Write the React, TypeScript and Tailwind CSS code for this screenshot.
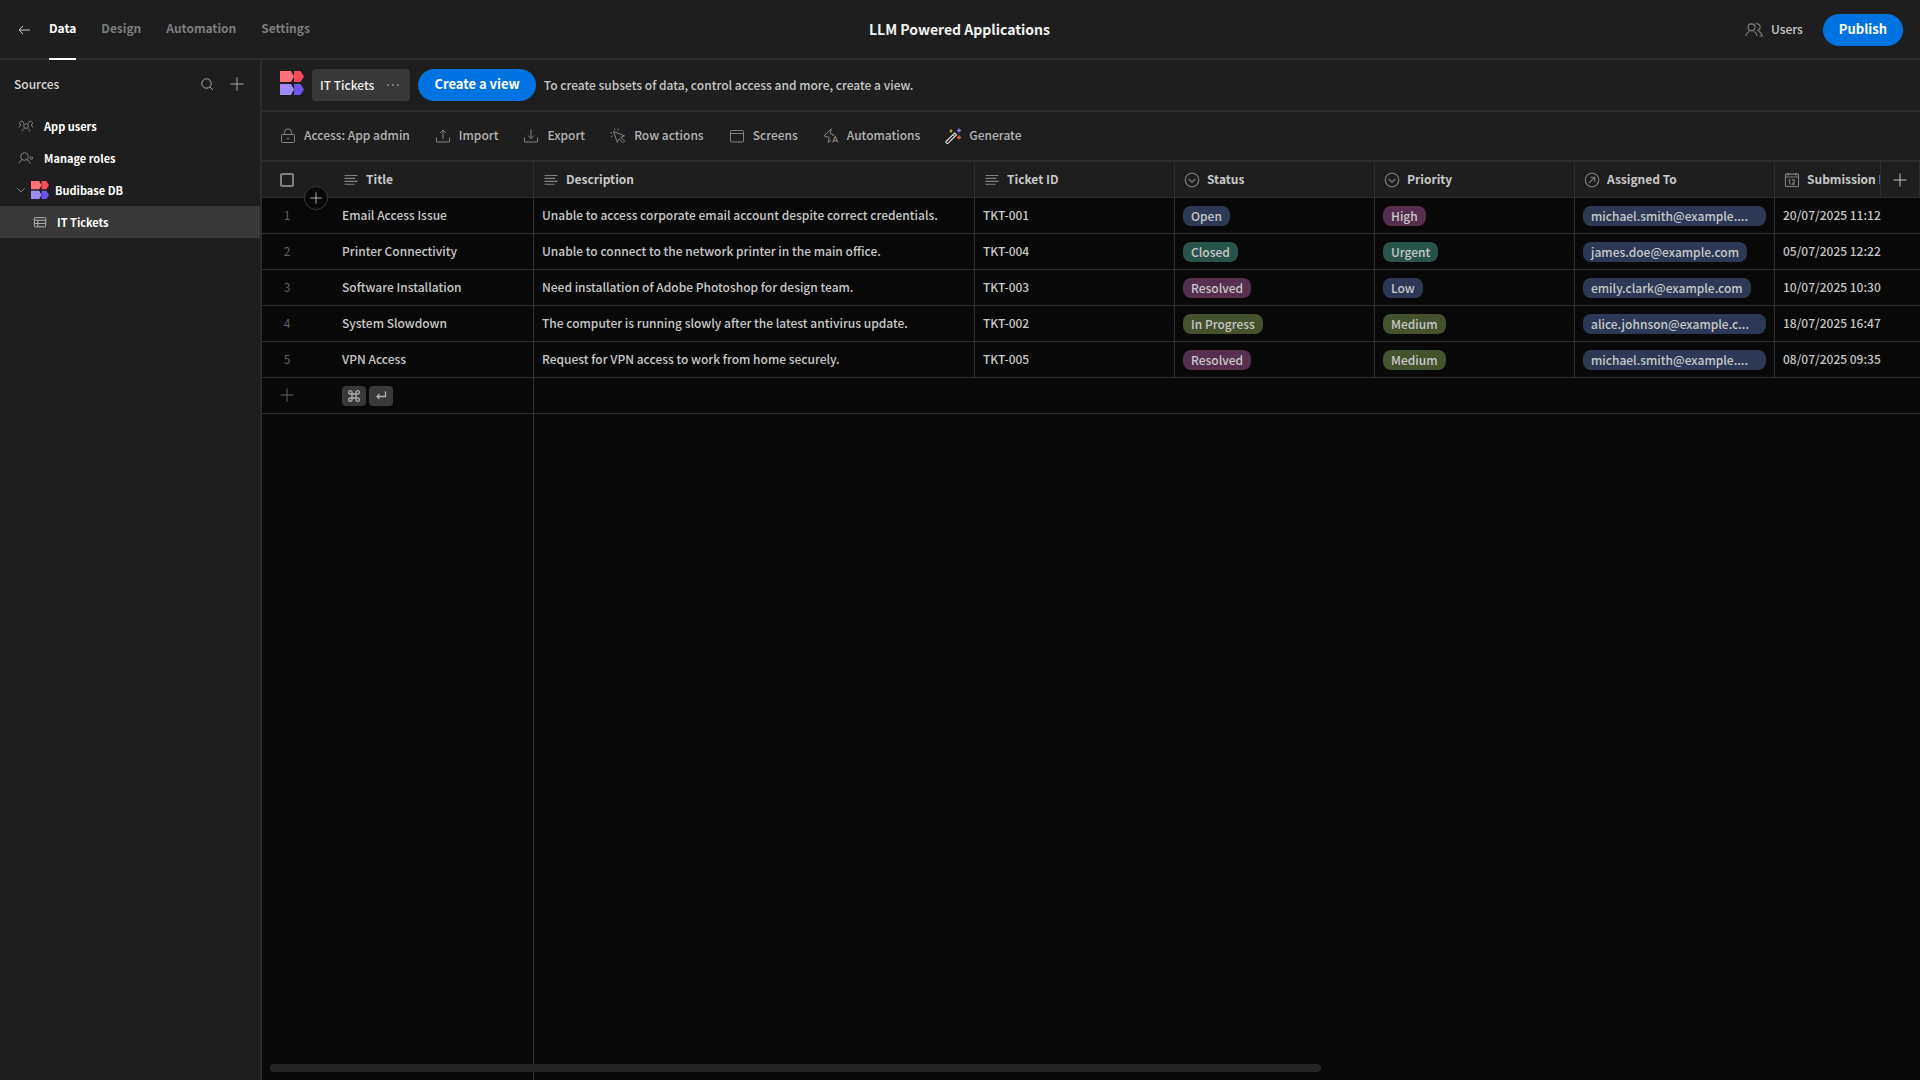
import type { ReactNode } from "react"

interface IconProps {
  size?: number
  className?: string
  children?: ReactNode
}

function Icon({ size = 16, className = "", children }: IconProps) {
  return (
    <svg
      width={size}
      height={size}
      viewBox="0 0 16 16"
      fill="none"
      stroke="currentColor"
      strokeWidth="1"
      aria-hidden="true"
      className={`shrink-0 ${className}`}
    >
      {children}
    </svg>
  )
}

function Logo({ size }: { size: number }) {
  return (
    <svg width={size} height={size} viewBox="0 0 24 24" aria-hidden="true" className="shrink-0">
      <path d="M0 0h11L14 5.500 11 11H0z" fill="#ff7277" />
      <path d="M14 0h6.500L24 5.500 20.500 11H14z" fill="#fb4a5a" />
      <path d="M0 13h11L14 18.500 11 24H0z" fill="#a08cf8" />
      <path d="M14 13h6.500L24 18.500 20.500 24H14z" fill="#6d55ee" />
    </svg>
  )
}

const BackIcon = () => (
  <Icon className="text-[#c4c4c4]">
    <path d="M14 8H3M7 4 3 8l4 4" />
  </Icon>
)

const SearchIcon = () => (
  <Icon>
    <circle cx="7.500" cy="7.500" r="4.700" />
    <path d="m11 11 3 3" />
  </Icon>
)

const PlusIcon = ({ size = 16 }: { size?: number }) => (
  <Icon size={size}>
    <path d="M8 1.500v13M1.500 8h13" />
  </Icon>
)

const UsersIcon = () => (
  <Icon size={18}>
    <circle cx="5.800" cy="5.500" r="3" />
    <path d="M.8 13.300c.3-2.300 1.500-3.300 3.200-4.300M7.600 9c1.700 1 2.900 2 3.200 4.300M9.200 2.700a3 3 0 1 1 1.600 5.700M12 8.800c1.700.9 2.900 2.200 3.200 4.500h-2" />
  </Icon>
)

const GroupIcon = () => (
  <Icon>
    <circle cx="8" cy="8" r="2.300" />
    <path d="M4.200 13.500c.3-1.700 1.100-2.600 2.400-3.300M9.400 10.200c1.300.7 2.100 1.600 2.400 3.300M5.500 5.600A2 2 0 1 0 3 7c-1 .5-1.700 1.200-1.900 2.500M10.500 5.600A2 2 0 1 1 13 7c1 .5 1.700 1.200 1.900 2.500" />
  </Icon>
)

const RoleIcon = () => (
  <Icon>
    <circle cx="6.500" cy="6.500" r="3.800" />
    <path d="M1 13.500c.4-2 1.600-2.800 3.300-3.700M8.700 9.800c1.700.9 2.900 1.700 3.300 3.700" />
    <circle cx="13.300" cy="8" r="1.300" />
  </Icon>
)

const ChevronIcon = () => (
  <Icon size={12} className="text-[#8a8a8a]">
    <path d="m3 5.500 5 5 5-5" strokeWidth="1.300" />
  </Icon>
)

const TableIcon = () => (
  <Icon size={14}>
    <rect x="1.500" y="3" width="13" height="10.500" rx="1" />
    <path d="M1.500 6h13M1.500 9.700h13M5.500 6v7.500" />
  </Icon>
)

const LockIcon = () => (
  <Icon>
    <rect x="1.500" y="6.500" width="13" height="8" rx="1" />
    <path d="M4.500 6.500V4.300a3.500 3.500 0 0 1 7 0v2.200" />
    <circle cx="8" cy="10.500" r=".6" fill="currentColor" />
  </Icon>
)

const ImportIcon = () => (
  <Icon>
    <path d="M1.500 9.500v4.500h13V9.500M8 11V2M5 5l3-3 3 3" />
  </Icon>
)

const ExportIcon = () => (
  <Icon>
    <path d="M1.500 9.500v4.500h13V9.500M8 1.500V10.500M5 7.500l3 3 3-3" />
  </Icon>
)

const ClickIcon = () => (
  <Icon>
    <path d="m3.500 3.500 11 4.300-3.800 1.600 4 3.700-1.600 1.600-4-3.900-1.700 3.700z" />
    <path d="M5 2.200 4.500.5M2 5.300l-1.800-.5M2.500 7.700l-1.700 1.300M7.600 2.500 8.700.7" />
  </Icon>
)

const ScreenIcon = () => (
  <Icon>
    <rect x="1.500" y="2.500" width="13" height="11.500" rx=".8" />
    <path d="M1.500 5.500h13" />
  </Icon>
)

const AutomationIcon = () => (
  <Icon>
    <path d="M8.300 12 5 14.500l1.300-5L.9 7.800 8.300.9 7.200 5.700l3.500 1.100L9.500 8" />
    <path d="m9.700 14.500 2.500-6 2.700 6M10.500 12.700h3.500" strokeWidth="1.200" />
  </Icon>
)

const WandIcon = () => (
  <Icon>
    <path d="M1 13.500 9.700 5l1.800 1.700L3 15.300c-1 .5-2.400-.6-2-1.800z" stroke="#d8d8d8" strokeWidth="1.200" />
    <path d="m8 6.800 1.700 1.700" stroke="#d8d8d8" />
    <path d="M6 1.500v3M4.500 3h3" stroke="#e8bd3c" strokeWidth="1.200" />
    <path d="M14 .5v4M12 2.500h4" stroke="#8b7df5" strokeWidth="1.400" />
    <path d="M14 7.500v4M12 9.500h4" stroke="#ee6051" strokeWidth="1.400" />
  </Icon>
)

const TextIcon = () => (
  <Icon size={18}>
    <path d="M2.200 4h11.600M2.200 6.600h9.600M2.200 9.200h11.600M2.200 11.800h9" />
  </Icon>
)

const OptionsIcon = () => (
  <Icon size={18}>
    <circle cx="8" cy="8" r="6" />
    <path d="m5 7 3 3 3-3" />
  </Icon>
)

const RelationIcon = () => (
  <Icon size={18}>
    <circle cx="8" cy="8" r="6" />
    <path d="m5.500 10.500 5-5M6.500 5.500h4v4" />
  </Icon>
)

const CalendarIcon = () => (
  <Icon size={18}>
    <rect x="2.200" y="2.800" width="11.600" height="11" rx=".8" />
    <path d="M2.200 5.300h11.600M4.700 1.500v2.500M11.300 1.500v2.500M5 8.300l1-.7v4.500M8 8.300c1-1.200 2.800-.5 2.200 1L8.200 11.700h2.500" />
  </Icon>
)

const tabs = ["Data", "Design", "Automation", "Settings"]

const actions = [
  { label: "Access: App admin", icon: <LockIcon /> },
  { label: "Import", icon: <ImportIcon /> },
  { label: "Export", icon: <ExportIcon /> },
  { label: "Row actions", icon: <ClickIcon /> },
  { label: "Screens", icon: <ScreenIcon /> },
  { label: "Automations", icon: <AutomationIcon /> },
  { label: "Generate", icon: <WandIcon /> },
]

const columns = [
  { label: "Title", icon: <TextIcon /> },
  { label: "Description", icon: <TextIcon /> },
  { label: "Ticket ID", icon: <TextIcon /> },
  { label: "Status", icon: <OptionsIcon /> },
  { label: "Priority", icon: <OptionsIcon /> },
  { label: "Assigned To", icon: <RelationIcon /> },
  { label: "Submission Date", icon: <CalendarIcon /> },
]

const tickets = [
  {
    title: "Email Access Issue",
    description: "Unable to access corporate email account despite correct credentials.",
    id: "TKT-001",
    status: "Open",
    priority: "High",
    assignee: "michael.smith@example....",
    date: "20/07/2025 11:12",
  },
  {
    title: "Printer Connectivity",
    description: "Unable to connect to the network printer in the main office.",
    id: "TKT-004",
    status: "Closed",
    priority: "Urgent",
    assignee: "james.doe@example.com",
    date: "05/07/2025 12:22",
  },
  {
    title: "Software Installation",
    description: "Need installation of Adobe Photoshop for design team.",
    id: "TKT-003",
    status: "Resolved",
    priority: "Low",
    assignee: "emily.clark@example.com",
    date: "10/07/2025 10:30",
  },
  {
    title: "System Slowdown",
    description: "The computer is running slowly after the latest antivirus update.",
    id: "TKT-002",
    status: "In Progress",
    priority: "Medium",
    assignee: "alice.johnson@example.c...",
    date: "18/07/2025 16:47",
  },
  {
    title: "VPN Access",
    description: "Request for VPN access to work from home securely.",
    id: "TKT-005",
    status: "Resolved",
    priority: "Medium",
    assignee: "michael.smith@example....",
    date: "08/07/2025 09:35",
  },
]

const pillColors: Record<string, string> = {
  Open: "bg-[#2c3854]",
  Low: "bg-[#2c3854]",
  Closed: "bg-[#28544c]",
  Urgent: "bg-[#28544c]",
  Resolved: "bg-[#562e4e]",
  High: "bg-[#562e4e]",
  "In Progress": "bg-[#44522e]",
  Medium: "bg-[#44522e]",
}

function Pill({ label }: { label: string }) {
  // Shortened labels take the whole cell
  const width = label.endsWith("...") ? "w-full" : "w-fit"
  return (
    <span
      className={`block h-5 rounded-lg px-2 leading-5 ${width} ${pillColors[label] ?? "bg-[#2c3854]"}`}
    >
      {label}
    </span>
  )
}

function Cell({ children }: { children?: ReactNode }) {
  return (
    <td className="h-9 overflow-hidden border-r border-b border-[#2e2e2e] px-2 whitespace-nowrap">
      {children}
    </td>
  )
}

function TextCell({ text }: { text: string }) {
  return (
    <Cell>
      <span className="block pb-0.5">{text}</span>
    </Cell>
  )
}

function Header() {
  return (
    <header className="grid h-[60px] shrink-0 grid-cols-[1fr_auto_1fr] items-center border-b-2 border-[#2c2c2c] bg-[#1e1e1e] pr-[17px] pl-4">
      <div className="flex h-[60px] items-center self-start">
        <button type="button" aria-label="Back">
          <BackIcon />
        </button>
        <nav className="ml-[17px] flex h-full gap-[25px]">
          {tabs.map((tab) => (
            <a
              key={tab}
              href="#"
              className={`flex h-full items-center border-b-2 pb-0.5 font-bold ${
                tab === "Data" ? "border-white text-white" : "border-transparent text-[#7c7c7c]"
              }`}
            >
              {tab}
            </a>
          ))}
        </nav>
      </div>
      <h1 className="pb-0.5 text-sm font-bold text-[#f2f2f2]">LLM Powered Applications</h1>
      <div className="flex items-center justify-end gap-5">
        <button type="button" className="flex items-center gap-2 font-medium text-[#c8c8c8]">
          <span className="text-[#808080]">
            <UsersIcon />
          </span>
          <span className="pb-0.5">Users</span>
        </button>
        <button
          type="button"
          className="h-8 rounded-full bg-[#0073e3] px-4 pb-0.5 text-[13px] font-bold text-white"
        >
          Publish
        </button>
      </div>
    </header>
  )
}

function Sidebar() {
  return (
    <aside className="w-[262px] shrink-0 border-r-2 border-[#2c2c2c] bg-[#1e1e1e]">
      <div className="flex h-[50px] items-center pr-[15px] pl-[14px]">
        <h2 className="flex-1 pb-0.5 font-medium text-[#d8d8d8]">Sources</h2>
        <div className="flex gap-[14px] pb-0.5 text-[#a8a8a8]">
          <button type="button" aria-label="Search sources">
            <SearchIcon />
          </button>
          <button type="button" aria-label="Add source">
            <PlusIcon />
          </button>
        </div>
      </div>
      <nav className="text-[11px] font-bold text-white">
        <a href="#" className="flex h-8 items-center gap-[10px] pl-[18px]">
          <span className="text-[#808080]">
            <GroupIcon />
          </span>
          App users
        </a>
        <a href="#" className="flex h-8 items-center gap-[10px] pl-[18px]">
          <span className="text-[#808080]">
            <RoleIcon />
          </span>
          Manage roles
        </a>
        <a href="#" className="flex h-8 items-center pl-[15px]">
          <ChevronIcon />
          <span className="mr-[6px] ml-1">
            <Logo size={18} />
          </span>
          Budibase DB
        </a>
        <a href="#" className="flex h-8 items-center gap-[10px] bg-[#383838] pl-[33px]">
          <span className="text-[#c0c0c0]">
            <TableIcon />
          </span>
          IT Tickets
        </a>
      </nav>
    </aside>
  )
}

function Grid() {
  return (
    <div className="relative flex-1 overflow-hidden bg-[#080808]">
      {/* Edge of the pinned title column */}
      <div className="absolute inset-y-0 left-[271px] w-px bg-[#2e2e2e]" />

      <table className="w-[1713px] table-fixed border-separate border-spacing-0 text-left text-[#c8c8c8]">
        <colgroup>
          <col className="w-[72px]" />
          <col className="w-[200px]" />
          <col className="w-[441px]" />
          <col className="w-[200px]" />
          <col className="w-[200px]" />
          <col className="w-[200px]" />
          <col className="w-[200px]" />
          <col className="w-[200px]" />
        </colgroup>
        <thead className="bg-[#1e1e1e]">
          <tr>
            <th className="h-9 border-b border-[#2e2e2e] pl-[18px]">
              <input
                type="checkbox"
                aria-label="Select all rows"
                className="block size-[14px] appearance-none rounded-xs border-2 border-[#808080]"
              />
            </th>
            {columns.map((column) => (
              <th
                key={column.label}
                className="h-9 overflow-hidden border-r border-b border-[#2e2e2e] px-2 font-bold whitespace-nowrap"
              >
                <div className="flex items-center gap-[6px]">
                  <span className="text-[#808080]">{column.icon}</span>
                  <span className="pb-0.5">{column.label}</span>
                </div>
              </th>
            ))}
          </tr>
        </thead>
        <tbody className="font-medium">
          {tickets.map((ticket, index) => (
            <tr key={ticket.id}>
              <td className="h-9 border-b border-[#2e2e2e] pr-[22px] pb-0.5 text-center font-normal text-[#606060]">
                {index + 1}
              </td>
              <TextCell text={ticket.title} />
              <TextCell text={ticket.description} />
              <TextCell text={ticket.id} />
              <Cell>
                <Pill label={ticket.status} />
              </Cell>
              <Cell>
                <Pill label={ticket.priority} />
              </Cell>
              <Cell>
                <Pill label={ticket.assignee} />
              </Cell>
              <TextCell text={ticket.date} />
            </tr>
          ))}
          <tr>
            <td className="h-9 border-b border-[#2e2e2e] pb-0.5 pl-[17px] text-[#606060]">
              <button type="button" aria-label="Add row" className="block">
                <PlusIcon />
              </button>
            </td>
            <Cell>
              <div className="flex gap-[3px] text-[#b0b0b0]">
                <kbd className="flex h-5 w-6 items-center justify-center rounded bg-[#393939]">
                  <Icon>
                    <path
                      d="M6 6h4v4H6zM6 6H4.300A1.700 1.700 0 1 1 6 4.300zM10 6V4.300A1.700 1.700 0 1 1 11.700 6zM10 10h1.700A1.700 1.700 0 1 1 10 11.700zM6 10v1.700A1.700 1.700 0 1 1 4.300 10z"
                      strokeWidth="1.300"
                    />
                  </Icon>
                </kbd>
                <kbd className="flex h-5 w-6 items-center justify-center rounded bg-[#393939]">
                  <Icon>
                    <path d="M12.500 3.500V8.500H4M6.500 6 4 8.500 6.500 11" strokeWidth="1.300" />
                  </Icon>
                </kbd>
              </div>
            </Cell>
            <td colSpan={6} className="border-b border-[#2e2e2e]" />
          </tr>
        </tbody>
      </table>

      <button
        type="button"
        aria-label="Insert row"
        className="absolute top-6 left-[42px] flex size-6 items-center justify-center rounded-full border border-[#393939] bg-[#080808] text-[#c0c0c0]"
      >
        <PlusIcon size={14} />
      </button>
      <button
        type="button"
        aria-label="Add column"
        className="absolute top-0 right-0 flex h-9 w-10 items-center justify-center border-x border-b border-[#2e2e2e] bg-[#1e1e1e] text-[#c0c0c0]"
      >
        <PlusIcon />
      </button>
      <div className="absolute inset-x-2 bottom-2">
        <div className="h-2 w-[64%] rounded bg-[#252525]" />
      </div>
    </div>
  )
}

export default function App() {
  return (
    <div className="flex h-screen flex-col overflow-hidden bg-[#080808] font-['Noto_Sans_CJK_KR',sans-serif] text-xs leading-5">
      <Header />
      <div className="flex min-h-0 flex-1">
        <Sidebar />
        <main className="flex min-w-0 flex-1 flex-col">
          <div className="flex h-[52px] shrink-0 items-center gap-2 border-b-2 border-[#2c2c2c] bg-[#1e1e1e] pl-[18px]">
            <span className="pb-1">
              <Logo size={24} />
            </span>
            <button
              type="button"
              className="flex h-8 items-center gap-3 rounded bg-[#383838] pr-[10px] pl-2 font-medium text-[#f0f0f0]"
            >
              IT Tickets
              <svg width="14" height="4" viewBox="0 0 14 4" fill="#8a8a8a" aria-hidden="true">
                <circle cx="2" cy="2" r="1" />
                <circle cx="7" cy="2" r="1" />
                <circle cx="12" cy="2" r="1" />
              </svg>
            </button>
            <button
              type="button"
              className="h-8 rounded-full bg-[#0073e3] px-4 pb-0.5 text-[13px] font-bold text-white"
            >
              Create a view
            </button>
            <p className="font-medium text-[#c8c8c8]">
              To create subsets of data, control access and more, create a view.
            </p>
          </div>

          <div className="flex h-[50px] shrink-0 items-center gap-[25px] border-b-2 border-[#2c2c2c] bg-[#1e1e1e] pl-[18px]">
            {actions.map((action) => (
              <button
                key={action.label}
                type="button"
                className="flex items-center gap-2 font-medium text-[#b4b4b4]"
              >
                <span className="text-[#808080]">{action.icon}</span>
                <span className="pb-0.5">{action.label}</span>
              </button>
            ))}
          </div>

          <Grid />
        </main>
      </div>
    </div>
  )
}
